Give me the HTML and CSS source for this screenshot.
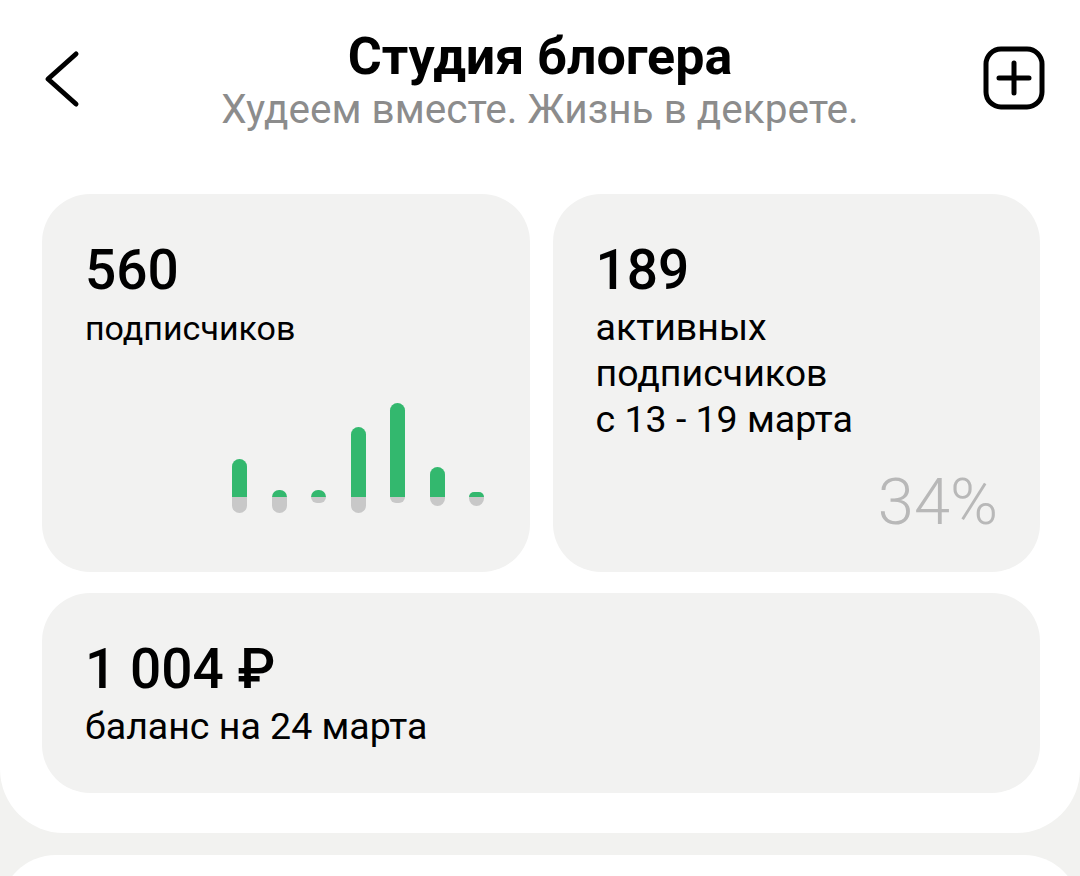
FILE: index.html
```html
<!DOCTYPE html>
<html lang="ru">
<head>
<meta charset="utf-8">
<title>Студия блогера</title>
<link rel="stylesheet" href="styles.css">
</head>
<body>
<div class="panel">
  <header class="header">
    <div class="back">
      <svg width="44" height="64" viewBox="0 0 44 64"><polyline points="35,6 7,31 35,56" fill="none" stroke="#000" stroke-width="5" stroke-linecap="round" stroke-linejoin="round"/></svg>
    </div>
    <div class="titles">
      <div class="title">Студия блогера</div>
      <div class="subtitle">Худеем вместе. Жизнь в декрете.</div>
    </div>
    <div class="add">
      <svg width="64" height="66" viewBox="0 0 64 66"><rect x="4" y="4" width="56" height="58" rx="15" fill="none" stroke="#000" stroke-width="5"/><path d="M17 33H47M32 18V48" stroke="#000" stroke-width="5" stroke-linecap="round"/></svg>
    </div>
  </header>
  <main class="grid">
    <section class="card card-tall">
      <div class="num">560</div>
      <div class="label label-small">подписчиков</div>
      <div class="chart">
        <div class="chart-up">
          <span class="up" style="height:38px"></span>
          <span class="up" style="height:7px"></span>
          <span class="up" style="height:7px"></span>
          <span class="up" style="height:70px"></span>
          <span class="up" style="height:94px"></span>
          <span class="up" style="height:30px"></span>
          <span class="up" style="height:5px"></span>
        </div>
        <div class="chart-down">
          <span class="down" style="height:16px"></span>
          <span class="down" style="height:16px"></span>
          <span class="down" style="height:6px"></span>
          <span class="down" style="height:16px"></span>
          <span class="down" style="height:6px"></span>
          <span class="down" style="height:9px"></span>
          <span class="down" style="height:9px"></span>
        </div>
      </div>
    </section>
    <section class="card card-tall">
      <div class="num">189</div>
      <div class="label">активных<br>подписчиков<br>с 13 - 19 марта</div>
      <div class="percent">34%</div>
    </section>
    <section class="card card-wide">
      <div class="num">1 004 ₽</div>
      <div class="label">баланс на 24 марта</div>
    </section>
  </main>
</div>
<div class="panel-next"></div>
</body>
</html>
```

FILE: styles.css
```css
* { box-sizing: border-box; }
html, body { margin: 0; padding: 0; }
body {
  background: #f2f2f0;
  font-family: Roboto, "Noto Sans", "Liberation Sans", sans-serif;
  color: #000;
  height: 876px;
  overflow: hidden;
}
.panel {
  background: #fff;
  border-radius: 0 0 64px 64px;
  padding-bottom: 40px;
}
.header {
  display: grid;
  grid-template-columns: 1fr auto 1fr;
  padding-top: 29px;
  margin-bottom: 61px;
}
.back {
  padding-left: 41px;
  padding-top: 19px;
}
.back svg, .add svg { display: block; }
.add {
  justify-self: end;
  padding-right: 34px;
  padding-top: 16px;
}
.titles { text-align: center; }
.title {
  font-size: 52px;
  line-height: 56px;
  font-weight: 700;
}
.subtitle {
  font-size: 40.5px;
  line-height: 48px;
  color: #8c8c8c;
}
.grid {
  display: grid;
  grid-template-columns: 1fr 1fr;
  gap: 21px 23px;
  padding: 0 40px 0 42px;
}
.card {
  background: #f2f2f1;
  border-radius: 48px;
  padding: 46px 44px 44px 43px;
  display: flex;
  flex-direction: column;
}
.card-tall { height: 378px; }
.card-wide {
  grid-column: 1 / 3;
  height: 200px;
}
.num {
  font-size: 55px;
  line-height: 60px;
  font-weight: 500;
}
.label {
  font-size: 37.5px;
  line-height: 46px;
  margin-top: 4px;
}
.label-small {
  font-size: 34px;
  margin-top: 5px;
}
.chart {
  margin-top: auto;
  margin-bottom: 15px;
  padding-left: 147px;
}
.chart-up, .chart-down {
  display: flex;
  gap: 24.5px;
}
.chart-up { align-items: flex-end; height: 94px; }
.chart-down { align-items: flex-start; height: 16px; }
.up, .down { width: 15px; display: block; }
.up { background: #33b86e; border-radius: 7.5px 7.5px 0 0; }
.down { background: #c8c8c8; border-radius: 0 0 7.5px 7.5px; }
.percent {
  margin-top: auto;
  margin-bottom: -9px;
  margin-right: -2px;
  align-self: flex-end;
  font-size: 65px;
  line-height: 70px;
  font-weight: 300;
  color: #b8b8b8;
}
.panel-next {
  background: #fff;
  border-radius: 56px 56px 0 0;
  margin-top: 22px;
  height: 200px;
}
```
